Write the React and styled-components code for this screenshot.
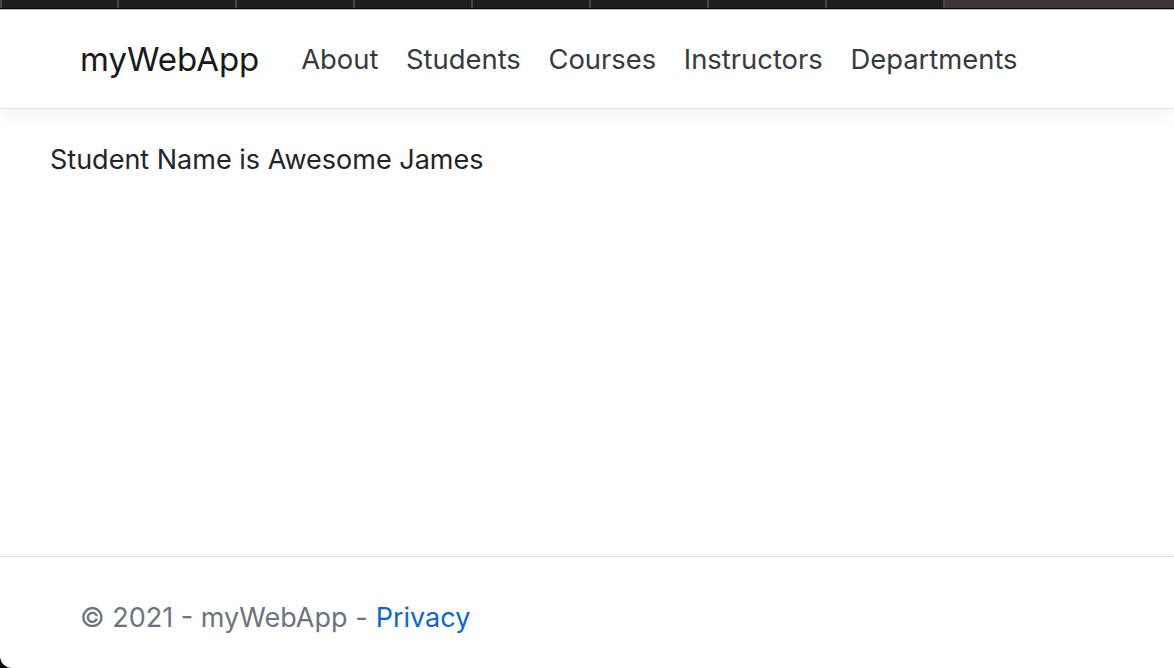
import styled, { createGlobalStyle } from "styled-components";

const GlobalStyle = createGlobalStyle`
  html, body {
    margin: 0;
    padding: 0;
    background: #ffffff;
  }
  body {
    font-family: Inter, "Noto Sans", "Liberation Sans", sans-serif;
    color: #212529;
  }
`;

const Page = styled.div`
  position: relative;
  display: flex;
  flex-direction: column;
  height: 668px;
  overflow: hidden;
`;

const TabStrip = styled.div`
  display: flex;
  height: 8px;
  background: #221e20;
  border-bottom: 1px solid #050505;
`;

const Tab = styled.div`
  width: ${(p) => (p.$first ? "115px" : "116px")};
  border-left: 2px solid #4a4548;
  background: ${(p) => (p.$active ? "#3e3537" : "transparent")};
  flex: ${(p) => (p.$active ? "1" : "none")};
`;

const StripEdge = styled.div`
  height: 1px;
  background: #b9b9b9;
`;

const Navbar = styled.nav`
  display: flex;
  align-items: center;
  height: 98px;
  padding: 0 80px;
  border-bottom: 1px solid #dee2e6;
  box-shadow: 0 6px 18px rgba(0, 0, 0, 0.05);
  position: relative;
  z-index: 1;
`;

const Brand = styled.a`
  font-size: 33px;
  color: #18191b;
  margin-right: 28px;
  text-decoration: none;
`;

const NavList = styled.div`
  display: flex;
  align-items: center;
`;

const NavLink = styled.a`
  font-size: 27.4px;
  color: #343a40;
  padding: 0 13.8px;
  text-decoration: none;
`;

const Main = styled.main`
  flex: 1;
  padding: 31px 50px 0;
`;

const Message = styled.p`
  margin: 0;
  font-size: 27px;
  line-height: 40px;
  color: #212529;
`;

const Footer = styled.footer`
  border-top: 1px solid #dee2e6;
  height: 112px;
  box-sizing: border-box;
  padding: 41px 80px 0;
  font-size: 27px;
  line-height: 40px;
  color: #6c757d;
`;

const FooterLink = styled.a`
  color: #0a66d6;
  text-decoration: none;
  margin-left: 0.3em;
`;

const Corner = styled.div`
  position: absolute;
  left: 0;
  bottom: 0;
  width: 12px;
  height: 12px;
  background: #000;
  &::after {
    content: "";
    position: absolute;
    inset: 0;
    background: #ffffff;
    border-bottom-left-radius: 12px;
  }
`;

const tabs = [0, 1, 2, 3, 4, 5, 6, 7];

export default function App() {
  return (
    <Page>
      <GlobalStyle />
      <TabStrip>
        {tabs.map((t) => (
          <Tab key={t} $first={t === 0} />
        ))}
        <Tab $active />
      </TabStrip>
      <StripEdge />
      <Navbar>
        <Brand href="#">myWebApp</Brand>
        <NavList>
          <NavLink href="#">About</NavLink>
          <NavLink href="#">Students</NavLink>
          <NavLink href="#">Courses</NavLink>
          <NavLink href="#">Instructors</NavLink>
          <NavLink href="#">Departments</NavLink>
        </NavList>
      </Navbar>
      <Main>
        <Message>Student Name is Awesome James</Message>
      </Main>
      <Footer>
        © 2021 - myWebApp -<FooterLink href="#">Privacy</FooterLink>
      </Footer>
      <Corner />
    </Page>
  );
}
